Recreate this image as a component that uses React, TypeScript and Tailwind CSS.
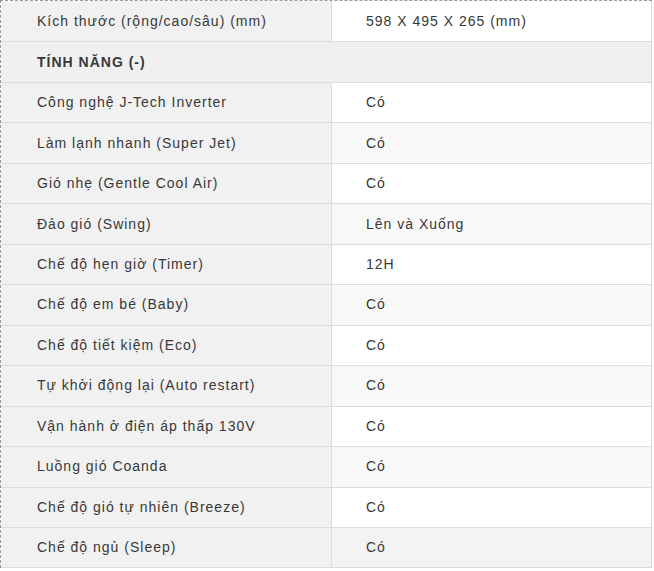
const rows: [string, string][] = [
  ['Công nghệ J-Tech Inverter', 'Có'],
  ['Làm lạnh nhanh (Super Jet)', 'Có'],
  ['Gió nhẹ (Gentle Cool Air)', 'Có'],
  ['Đảo gió (Swing)', 'Lên và Xuống'],
  ['Chế độ hẹn giờ (Timer)', '12H'],
  ['Chế độ em bé (Baby)', 'Có'],
  ['Chế độ tiết kiệm (Eco)', 'Có'],
  ['Tự khởi động lại (Auto restart)', 'Có'],
  ['Vận hành ở điện áp thấp 130V', 'Có'],
  ['Luồng gió Coanda', 'Có'],
  ['Chế độ gió tự nhiên (Breeze)', 'Có'],
  ['Chế độ ngủ (Sleep)', 'Có'],
]

export default function App() {
  return (
    <div className="min-h-[571px] bg-white font-['Liberation_Sans',Arial,sans-serif] text-[14px] tracking-[1px] text-[#383838]">
      <div className="w-[652px] border-t border-l border-dashed border-[#999]">
        <div className="w-[651px] border-r border-[#dcdcdc]">
          {/* kích thước */}
          <div className="grid h-[41px] grid-cols-[331px_1fr] border-b border-[#dcdcdc]">
            <div className="flex items-center border-r border-[#dcdcdc] bg-[#f1f1f1] pt-[1px] pl-[36px]">
              Kích thước (rộng/cao/sâu) (mm)
            </div>
            <div className="flex items-center bg-white pt-[1px] pl-[34px]">598 X 495 X 265 (mm)</div>
          </div>

          <div className="flex h-[41px] items-center border-b border-[#dcdcdc] bg-[#f0f0f0] pl-[36px] font-bold">
            TÍNH NĂNG (-)
          </div>

          {rows.map(([label, value], i) => (
            <div
              key={label}
              className="grid h-[40.46px] grid-cols-[331px_1fr] border-b border-[#dcdcdc]"
            >
              <div className="flex items-center border-r border-[#dcdcdc] bg-[#f1f1f1] pl-[36px]">
                {label}
              </div>
              <div
                className={
                  'flex items-center pl-[34px] ' +
                  (i === rows.length - 1 ? 'bg-[#f3f3f3]' : i % 2 === 0 ? 'bg-white' : 'bg-[#f8f8f8]')
                }
              >
                {value}
              </div>
            </div>
          ))}
        </div>
      </div>
    </div>
  )
}
